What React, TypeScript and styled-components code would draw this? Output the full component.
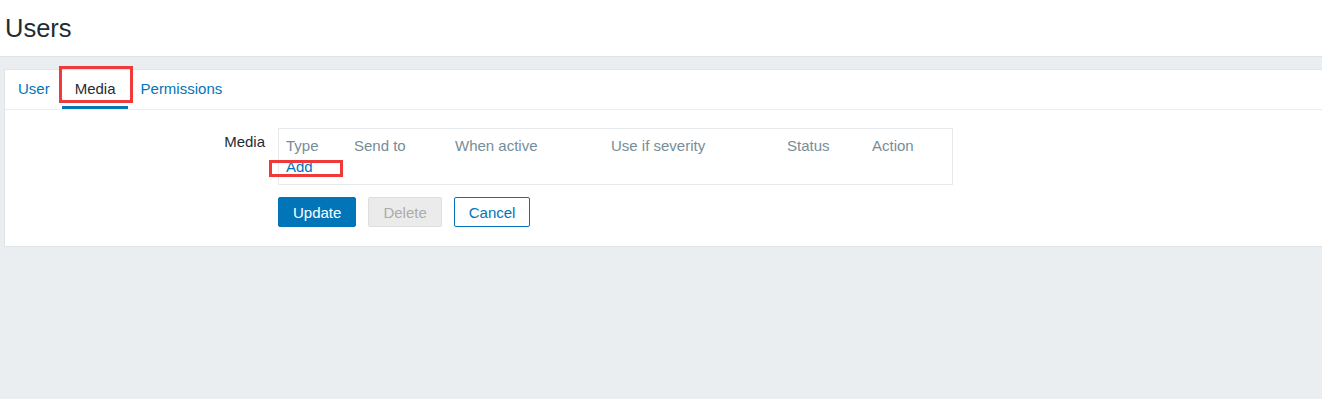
import React from "react";
import styled, { createGlobalStyle } from "styled-components";

const Global = createGlobalStyle`
  html, body {
    margin: 0;
    padding: 0;
    background: #ebeef0;
    font-family: "Liberation Sans", Arial, sans-serif;
    overflow: hidden;
  }
  #root { min-height: 100vh; }
`;

const Header = styled.header`
  height: 56px;
  background: #ffffff;
  border-bottom: 1px solid #dfe4e7;
  display: flex;
  align-items: center;
  padding-left: 5px;
`;

const Title = styled.h1`
  margin: 0;
  font-size: 25.5px;
  font-weight: normal;
  color: #1f2c33;
  line-height: 30px;
`;

const Panel = styled.section`
  margin: 12px 0 0 4px;
  background: #ffffff;
  border: 1px solid #dfe4e7;
  border-right: none;
  padding-bottom: 19px;
`;

const TabList = styled.nav`
  display: flex;
  height: 39px;
  padding-left: 0.5px;
  border-bottom: 1px solid #ebeef0;
`;

const Tab = styled.div<{ $active?: boolean }>`
  position: relative;
  display: flex;
  align-items: center;
  padding: 1px 12.5px 0;
  font-size: 15px;
  line-height: 18px;
  color: ${(p) => (p.$active ? "#1f2c33" : "#0275b8")};
  border-bottom: 3px solid ${(p) => (p.$active ? "#0275b8" : "transparent")};
  cursor: pointer;
`;

const Highlight = styled.span<{ $l: number; $t: number; $w: number; $h: number }>`
  position: absolute;
  left: ${(p) => p.$l}px;
  top: ${(p) => p.$t}px;
  width: ${(p) => p.$w}px;
  height: ${(p) => p.$h}px;
  box-sizing: border-box;
  border: 3px solid #ef3a3c;
  pointer-events: none;
`;

const Form = styled.div`
  padding-top: 18px;
`;

const FormRow = styled.div`
  display: grid;
  grid-template-columns: 260px 1fr;
  column-gap: 13px;
  align-items: start;
`;

const Label = styled.label`
  text-align: right;
  font-size: 15px;
  line-height: 18px;
  color: #1f2c33;
  padding-top: 5px;
`;

const MediaTable = styled.div`
  box-sizing: border-box;
  width: 675px;
  border: 1px solid #e8ebee;
  padding: 8px 7px 8px;
`;

const HeadRow = styled.div`
  display: grid;
  grid-template-columns: 68px 101px 156px 176px 85px 1fr;
`;

const HeadCell = styled.span`
  font-size: 15px;
  line-height: 18px;
  color: #768d99;
  white-space: nowrap;
`;

const AddRow = styled.div`
  margin-top: 3px;
  position: relative;
`;

const Link = styled.a`
  font-size: 15px;
  line-height: 18px;
  color: #0275b8;
  text-decoration: none;
  cursor: pointer;
  position: relative;
  display: inline-block;
`;

const Buttons = styled.div`
  display: flex;
  gap: 12px;
  margin: 12px 0 0 273px;
`;

const Button = styled.button<{ $variant: "primary" | "disabled" | "outline" }>`
  height: 30px;
  padding: 0 14px;
  font-family: "Liberation Sans", Arial, sans-serif;
  font-size: 15px;
  border-radius: 2px;
  border: 1px solid
    ${(p) =>
      p.$variant === "primary" ? "#0275b8" : p.$variant === "disabled" ? "#dcdfe1" : "#0275b8"};
  background: ${(p) =>
    p.$variant === "primary" ? "#0275b8" : p.$variant === "disabled" ? "#ebebeb" : "#ffffff"};
  color: ${(p) =>
    p.$variant === "primary" ? "#ffffff" : p.$variant === "disabled" ? "#acacac" : "#0275b8"};
  cursor: ${(p) => (p.$variant === "disabled" ? "default" : "pointer")};
`;

const columns = ["Type", "Send to", "When active", "Use if severity", "Status", "Action"];

export default function App() {
  return (
    <>
      <Global />
      <Header>
        <Title>Users</Title>
      </Header>
      <Panel>
        <TabList>
          <Tab>User</Tab>
          <Tab $active>
            Media
            <Highlight $l={-3} $t={-4} $w={74} $h={37} />
          </Tab>
          <Tab>Permissions</Tab>
        </TabList>
        <Form>
          <FormRow>
            <Label>Media</Label>
            <MediaTable>
              <HeadRow>
                {columns.map((c) => (
                  <HeadCell key={c}>{c}</HeadCell>
                ))}
              </HeadRow>
              <AddRow>
                <Link>
                  Add
                  <Highlight $l={-17} $t={2} $w={74} $h={17} />
                </Link>
              </AddRow>
            </MediaTable>
          </FormRow>
          <Buttons>
            <Button $variant="primary">Update</Button>
            <Button $variant="disabled" disabled>
              Delete
            </Button>
            <Button $variant="outline">Cancel</Button>
          </Buttons>
        </Form>
      </Panel>
    </>
  );
}
